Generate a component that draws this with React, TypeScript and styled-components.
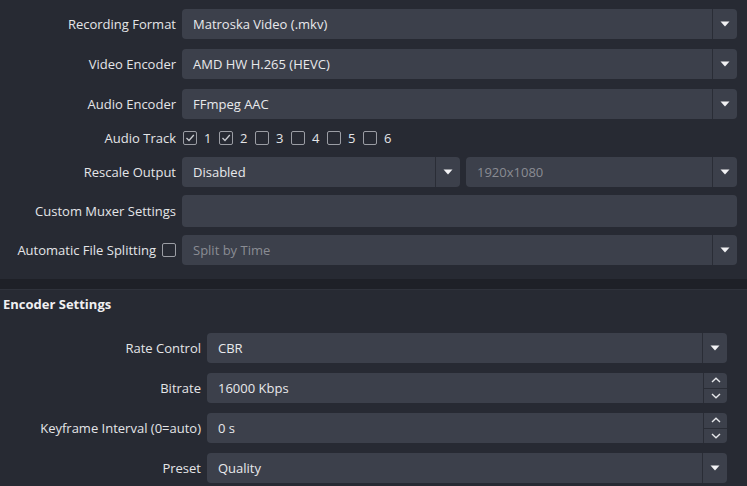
import { FunctionComponent } from "react";
import styled, { createGlobalStyle } from "styled-components";

const GlobalStyle = createGlobalStyle`
  html, body {
    margin: 0;
    background: #272a33;
  }
  body {
    font-family: "Open Sans", "DejaVu Sans", sans-serif;
    font-size: 13px;
    color: #e4e5e8;
  }
`;

const Page = styled.main`
  width: 747px;
  height: 486px;
  overflow: hidden;
  display: flex;
  flex-direction: column;

  & > * {
    flex-shrink: 0;
  }
`;

const Section = styled.section<{ $labelW: number; $padRight: number; $padTop: number }>`
  display: grid;
  grid-template-columns: ${(p) => p.$labelW}px 1fr;
  column-gap: 6px;
  padding: ${(p) => p.$padTop}px ${(p) => p.$padRight}px 14px 0;
`;

const Label = styled.div<{ $mt?: number; $h?: number }>`
  display: flex;
  align-items: center;
  justify-content: flex-end;
  gap: 6px;
  height: ${(p) => p.$h ?? 30}px;
  margin-top: ${(p) => p.$mt ?? 0}px;
  white-space: nowrap;
`;

const Field = styled.div<{ $mt?: number; $h?: number }>`
  display: flex;
  align-items: center;
  gap: 6px;
  height: ${(p) => p.$h ?? 30}px;
  margin-top: ${(p) => p.$mt ?? 0}px;
  min-width: 0;
`;

const Box = styled.div<{ $dim?: boolean; $grow?: number }>`
  flex: ${(p) => p.$grow ?? 1} 1 0;
  height: 100%;
  display: flex;
  align-items: stretch;
  background: #3c404b;
  border-radius: 4px;
  color: ${(p) => (p.$dim ? "#8a8c93" : "#e8e9ec")};
  min-width: 0;
`;

const BoxText = styled.span`
  flex: 1;
  display: flex;
  align-items: center;
  padding-left: 11px;
  white-space: nowrap;
`;

const DropButton = styled.div`
  width: 24px;
  border-left: 1px solid #2a2d36;
  display: flex;
  align-items: center;
  justify-content: center;
`;

const SpinButtons = styled.div`
  width: 23px;
  border-left: 1px solid #2a2d36;
  display: flex;
  flex-direction: column;
`;

const SpinHalf = styled.div<{ $top?: boolean }>`
  flex: 1;
  display: flex;
  align-items: center;
  justify-content: center;
  border-bottom: ${(p) => (p.$top ? "1px solid #2a2d36" : "none")};
`;

const Caret = () => (
  <svg width="10" height="6" viewBox="0 0 10 6">
    <path d="M0.5 0.5 H9.5 L5 5.5 Z" fill="#f2f2f4" />
  </svg>
);

const Chevron = ({ up }: { up?: boolean }) => (
  <svg width="10" height="6" viewBox="0 0 10 6">
    <path
      d={up ? "M1 5 L5 1.2 L9 5" : "M1 1 L5 4.8 L9 1"}
      fill="none"
      stroke="#e6e7ea"
      strokeWidth="1.4"
    />
  </svg>
);

const Tracks = styled.div`
  display: flex;
  align-items: center;
  gap: 8px;
  padding-left: 1px;
`;

const Track = styled.label`
  display: flex;
  align-items: center;
  gap: 7px;
  width: 28px;
`;

const Check = styled.span`
  width: 12px;
  height: 12px;
  border: 1px solid #9b9da4;
  border-radius: 2px;
  display: inline-flex;
  align-items: center;
  justify-content: center;
  flex-shrink: 0;
`;

const CheckBox = ({ checked }: { checked?: boolean }) => (
  <Check>
    {checked && (
      <svg width="10" height="10" viewBox="0 0 10 10">
        <path d="M1.5 5 L4 7.5 L8.8 2" fill="none" stroke="#c9cbd0" strokeWidth="1.3" />
      </svg>
    )}
  </Check>
);

const Divider = styled.div`
  height: 10px;
  background: #1e2027;
  border-bottom: 1px solid #2f323b;
`;

const Heading = styled.h3`
  margin: 0;
  padding: 2px 0 0 3px;
  height: 23px;
  display: flex;
  align-items: center;
  font-size: 13px;
  font-weight: 700;
  color: #f0f0f2;
`;

const Combo: FunctionComponent<{ text: string; dim?: boolean; grow?: number }> = ({
  text,
  dim,
  grow,
}) => (
  <Box $dim={dim} $grow={grow}>
    <BoxText>{text}</BoxText>
    <DropButton>
      <Caret />
    </DropButton>
  </Box>
);

const Spin: FunctionComponent<{ text: string }> = ({ text }) => (
  <Box>
    <BoxText>{text}</BoxText>
    <SpinButtons>
      <SpinHalf $top>
        <Chevron up />
      </SpinHalf>
      <SpinHalf>
        <Chevron />
      </SpinHalf>
    </SpinButtons>
  </Box>
);

const App: FunctionComponent = () => {
  const tracks = [true, true, false, false, false, false];

  return (
    <Page>
      <GlobalStyle />
      <Section $labelW={176} $padRight={10} $padTop={9}>
        <Label>Recording Format</Label>
        <Field>
          <Combo text="Matroska Video (.mkv)" />
        </Field>

        <Label $mt={10}>Video Encoder</Label>
        <Field $mt={10}>
          <Combo text="AMD HW H.265 (HEVC)" />
        </Field>

        <Label $mt={10}>Audio Encoder</Label>
        <Field $mt={10}>
          <Combo text="FFmpeg AAC" />
        </Field>

        <Label $mt={10} $h={18}>Audio Track</Label>
        <Field $mt={10} $h={18}>
          <Tracks>
            {tracks.map((on, i) => (
              <Track key={i}>
                <CheckBox checked={on} />
                {i + 1}
              </Track>
            ))}
          </Tracks>
        </Field>

        <Label $mt={10}>Rescale Output</Label>
        <Field $mt={10}>
          <Combo text="Disabled" grow={278} />
          <Combo text="1920x1080" dim grow={271} />
        </Field>

        <Label $mt={8} $h={32}>Custom Muxer Settings</Label>
        <Field $mt={8} $h={32}>
          <Box />
        </Field>

        <Label $mt={8}>
          Automatic File Splitting
          <CheckBox />
        </Label>
        <Field $mt={8}>
          <Combo text="Split by Time" dim />
        </Field>
      </Section>

      <Divider />
      <Heading>Encoder Settings</Heading>

      <Section $labelW={201} $padRight={20} $padTop={18}>
        <Label>Rate Control</Label>
        <Field>
          <Combo text="CBR" />
        </Field>

        <Label $mt={10}>Bitrate</Label>
        <Field $mt={10}>
          <Spin text="16000 Kbps" />
        </Field>

        <Label $mt={10}>Keyframe Interval (0=auto)</Label>
        <Field $mt={10}>
          <Spin text="0 s" />
        </Field>

        <Label $mt={10}>Preset</Label>
        <Field $mt={10}>
          <Combo text="Quality" />
        </Field>
      </Section>
    </Page>
  );
};

export default App;
